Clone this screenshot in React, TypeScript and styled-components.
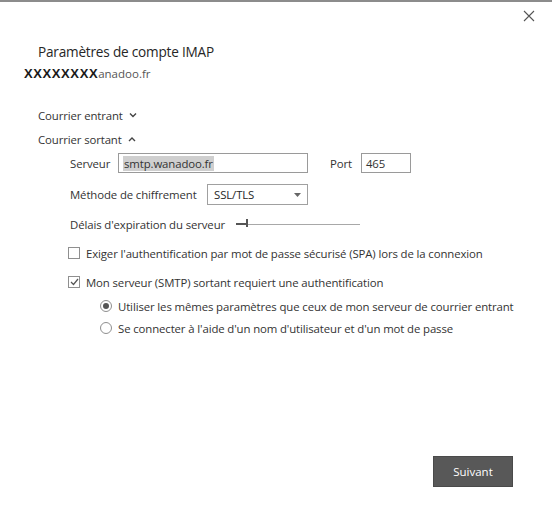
import styled, { createGlobalStyle } from 'styled-components';

const GlobalStyle = createGlobalStyle`
  html, body {
    margin: 0;
    padding: 0;
    background: #ffffff;
  }
  body {
    font-family: "Open Sans", "Noto Sans", "Liberation Sans", sans-serif;
    color: #333333;
  }
`;

const Window = styled.div`
  width: 552px;
  height: 528px;
  box-sizing: border-box;
  border-top: 2px solid #8c8c8c;
  background: #ffffff;
  display: flex;
  flex-direction: column;
`;

const CloseRow = styled.div`
  height: 30px;
  display: flex;
  justify-content: flex-end;
  align-items: flex-start;
  padding: 8px 17px 0 0;
  box-sizing: border-box;
`;

const CloseButton = styled.button`
  width: 12px;
  height: 12px;
  padding: 0;
  border: none;
  background: none;
  display: flex;
  cursor: pointer;
`;

const Title = styled.h1`
  margin: 10px 0 0 38px;
  font-size: 13.6px;
  letter-spacing: -0.2px;
  line-height: 20px;
  font-weight: 400;
  color: #262626;
`;

const Email = styled.div`
  margin: 4px 0 0 24px;
  font-size: 11.5px;
  line-height: 16px;
  color: #555555;
  display: flex;
  align-items: baseline;
`;

const Mask = styled.span`
  color: #1a1a1a;
  font-weight: 700;
  font-size: 13px;
  letter-spacing: 0.6px;
  font-family: "Liberation Sans", sans-serif;
`;

const Row = styled.div<{ $top: number; $indent: number; $height?: number }>`
  margin-top: ${(p) => p.$top}px;
  padding-left: ${(p) => p.$indent}px;
  height: ${(p) => p.$height ?? 18}px;
  display: flex;
  align-items: center;
  font-size: 11.4px;
  letter-spacing: -0.12px;
  color: #333333;
`;

const SectionToggle = styled.span`
  display: flex;
  align-items: center;
  gap: 6px;
  cursor: pointer;
`;

const Label = styled.span<{ $width?: number }>`
  width: ${(p) => (p.$width ? `${p.$width}px` : 'auto')};
  flex-shrink: 0;
  white-space: nowrap;
`;

const TextBox = styled.div<{ $width: number }>`
  width: ${(p) => p.$width}px;
  height: 20px;
  box-sizing: border-box;
  border: 1px solid #9a9a9a;
  display: flex;
  align-items: center;
  padding-left: 4px;
  color: #333333;
`;

const Selected = styled.span`
  background: #cfcfcf;
  padding: 0 1px;
`;

const PortLabel = styled.span`
  margin: 0 9px 0 22px;
`;

const SelectBox = styled.div`
  width: 101px;
  height: 21px;
  box-sizing: border-box;
  border: 1px solid #a0a0a0;
  display: flex;
  align-items: center;
  justify-content: space-between;
  padding: 0 6px 0 6px;
  color: #262626;
`;

const SliderTrack = styled.div`
  position: relative;
  width: 124px;
  height: 12px;
  display: flex;
  align-items: center;
`;

const TrackFill = styled.div`
  width: 12px;
  height: 2px;
  background: #555555;
`;

const TrackRest = styled.div`
  flex: 1;
  height: 1px;
  background: #a8a8a8;
`;

const Thumb = styled.div`
  position: absolute;
  left: 10px;
  top: 1px;
  width: 2px;
  height: 8px;
  background: #555555;
`;

const Box = styled.span<{ $round?: boolean }>`
  width: 12px;
  height: 12px;
  box-sizing: border-box;
  border: 1px solid #8f8f8f;
  border-radius: ${(p) => (p.$round ? '50%' : '0')};
  display: flex;
  align-items: center;
  justify-content: center;
  margin-right: 6px;
  flex-shrink: 0;
`;

const Dot = styled.span`
  width: 6px;
  height: 6px;
  border-radius: 50%;
  background: #555555;
`;

const Footer = styled.div`
  margin-top: auto;
  display: flex;
  justify-content: flex-end;
  padding: 0 39px 41px 0;
`;

const PrimaryButton = styled.button`
  width: 80px;
  height: 31px;
  border: 1px solid #4a4a4a;
  background: #585858;
  color: #ffffff;
  font-family: "Open Sans", "Noto Sans", sans-serif;
  font-size: 11.5px;
  cursor: pointer;
`;

const Chevron = ({ up }: { up?: boolean }) => (
  <svg width="8" height="6" viewBox="0 0 8 6">
    <path
      d={up ? 'M1 5 L4 2 L7 5' : 'M1 1.5 L4 4.5 L7 1.5'}
      fill="none"
      stroke="#444"
      strokeWidth="1.4"
    />
  </svg>
);

export default function App() {
  return (
    <>
      <GlobalStyle />
      <Window>
        <CloseRow>
          <CloseButton aria-label="Fermer">
            <svg width="12" height="12" viewBox="0 0 12 12">
              <path d="M1 1 L11 11 M11 1 L1 11" stroke="#555" strokeWidth="1.1" />
            </svg>
          </CloseButton>
        </CloseRow>

        <Title>Paramètres de compte IMAP</Title>
        <Email>
          <Mask>XXXXXXXX</Mask>
          <span>anadoo.fr</span>
        </Email>

        <Row $top={24} $indent={38}>
          <SectionToggle>
            Courrier entrant <Chevron />
          </SectionToggle>
        </Row>
        <Row $top={6} $indent={38}>
          <SectionToggle>
            Courrier sortant <Chevron up />
          </SectionToggle>
        </Row>

        <Row $top={5} $indent={70} $height={20}>
          <Label $width={48}>Serveur</Label>
          <TextBox $width={190}>
            <Selected>smtp.wanadoo.fr</Selected>
          </TextBox>
          <PortLabel>Port</PortLabel>
          <TextBox $width={50}>465</TextBox>
        </Row>

        <Row $top={11} $indent={70} $height={21}>
          <Label $width={137}>Méthode de chiffrement</Label>
          <SelectBox>
            SSL/TLS
            <svg width="7" height="4" viewBox="0 0 7 4">
              <path d="M0 0 L7 0 L3.5 4 Z" fill="#666" />
            </svg>
          </SelectBox>
        </Row>

        <Row $top={10} $indent={70}>
          <Label $width={166}>Délais d'expiration du serveur</Label>
          <SliderTrack>
            <TrackFill />
            <TrackRest />
            <Thumb />
          </SliderTrack>
        </Row>

        <Row $top={11} $indent={68}>
          <Box />
          <Label>Exiger l'authentification par mot de passe sécurisé (SPA) lors de la connexion</Label>
        </Row>

        <Row $top={11} $indent={68}>
          <Box>
            <svg width="9" height="8" viewBox="0 0 9 8">
              <path d="M1 4 L3.5 6.5 L8 1" fill="none" stroke="#555" strokeWidth="1.2" />
            </svg>
          </Box>
          <Label>Mon serveur (SMTP) sortant requiert une authentification</Label>
        </Row>

        <Row $top={6} $indent={100}>
          <Box $round>
            <Dot />
          </Box>
          <Label>Utiliser les mêmes paramètres que ceux de mon serveur de courrier entrant</Label>
        </Row>

        <Row $top={4} $indent={100}>
          <Box $round />
          <Label>Se connecter à l'aide d'un nom d'utilisateur et d'un mot de passe</Label>
        </Row>

        <Footer>
          <PrimaryButton>Suivant</PrimaryButton>
        </Footer>
      </Window>
    </>
  );
}
